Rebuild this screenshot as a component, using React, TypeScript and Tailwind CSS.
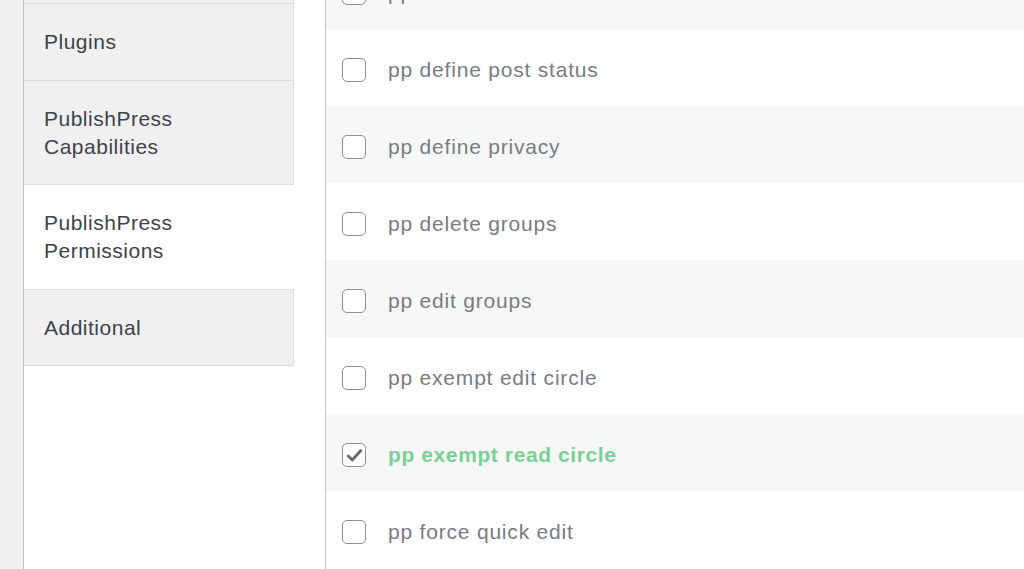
import React from "react";

const font = { fontFamily: '"Liberation Sans", Arial, sans-serif' };

type Row = { label: string; checked?: boolean };

const rows: Row[] = [
  { label: "pp define moderation" },
  { label: "pp define post status" },
  { label: "pp define privacy" },
  { label: "pp delete groups" },
  { label: "pp edit groups" },
  { label: "pp exempt edit circle" },
  { label: "pp exempt read circle", checked: true },
  { label: "pp force quick edit" },
];

function Checkbox({ checked }: { checked?: boolean }) {
  return (
    <div className="flex h-[24px] w-[24px] shrink-0 items-center justify-center rounded-[5px] border-[1.5px] border-[#8c8f94] bg-white">
      {checked && (
        <svg width="17" height="15" viewBox="0 0 17 15">
          <path d="M2.2 8 L6.3 12 L14.8 2.6" fill="none" stroke="#6b6e72" strokeWidth="3" strokeLinecap="round" strokeLinejoin="round" />
        </svg>
      )}
    </div>
  );
}

function Tab({ lines, active, h }: { lines: string[]; active?: boolean; h: string }) {
  return (
    <div
      className={
        active
          ? `flex ${h} w-[270px] items-center border-b border-[#dcdcde] bg-white pl-[20px] text-[21px] leading-[28px] tracking-[0.5px] text-[#3c434a]`
          : `flex ${h} w-[270px] items-center border-r border-b border-[#dcdcde] bg-[#f0f0f1] pl-[20px] text-[21px] leading-[28px] tracking-[0.5px] text-[#3c434a]`
      }
    >
      <div>
        {lines.map((l) => (
          <div key={l}>{l}</div>
        ))}
      </div>
    </div>
  );
}

export default function App() {
  return (
    <div className="flex h-[569px] w-[1024px] overflow-hidden bg-[#f0f0f1]" style={font}>
      <div className="w-[23px] shrink-0 bg-[#f0f0f1]" />
      <div className="w-[303px] shrink-0 border-x border-[#c3c4c7] bg-white">
        <div className="-mt-[73px] flex flex-col">
          <Tab lines={["Users"]} h="h-[77px]" />
          <Tab lines={["Plugins"]} h="h-[77px]" />
          <Tab lines={["PublishPress", "Capabilities"]} h="h-[104px]" />
          <Tab lines={["PublishPress", "Permissions"]} active h="h-[105px]" />
          <Tab lines={["Additional"]} h="h-[76px]" />
        </div>
      </div>
      <div className="flex-1 bg-white">
        <div className="-mt-[48px] flex flex-col">
          {rows.map((r, i) => (
            <div
              key={r.label}
              className={`flex h-[77px] items-center gap-[22px] pl-[16px] pt-[5px] ${i % 2 === 0 ? "bg-[#f6f7f7]" : "bg-white"}`}
            >
              <Checkbox checked={r.checked} />
              <span
                className={
                  r.checked
                    ? "text-[21px] font-bold tracking-[0.6px] text-[#7ccf93]"
                    : "text-[21px] tracking-[0.8px] text-[#787c82]"
                }
              >
                {r.label}
              </span>
            </div>
          ))}
        </div>
      </div>
    </div>
  );
}
